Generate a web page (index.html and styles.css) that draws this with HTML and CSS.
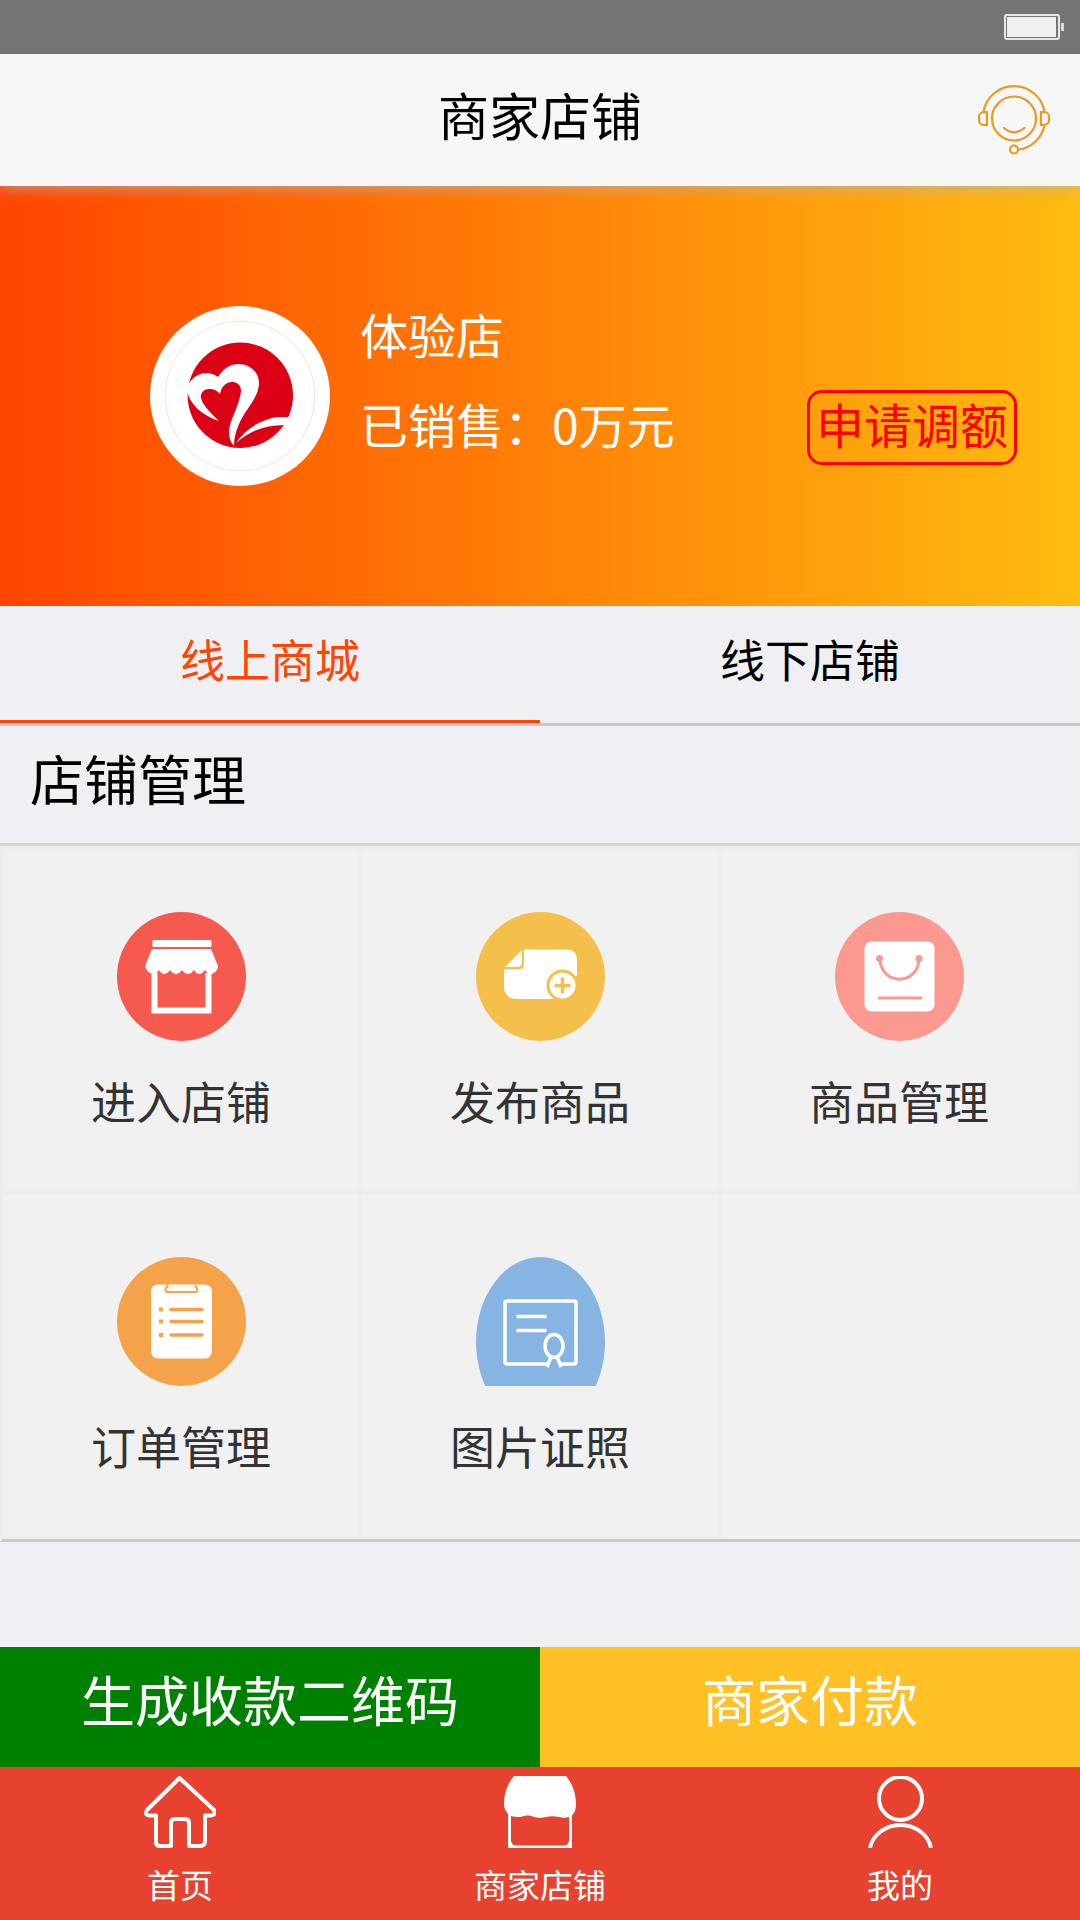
FILE: index.html
```html
<!DOCTYPE html>
<html lang="zh-CN">
<head>
<meta charset="utf-8">
<meta name="viewport" content="width=device-width">
<title>商家店铺</title>
<link rel="stylesheet" href="styles.css">
</head>
<body class="app">
<div class="status-bar">
  <svg class="battery" viewBox="0 0 60 26" aria-hidden="true">
    <rect x="1" y="1" width="54" height="24" rx="2" fill="none" stroke="#e8e8e8" stroke-width="2"/>
    <rect x="3" y="3" width="49" height="20" fill="#f0f0f0"/>
    <rect x="57" y="9" width="3" height="8" fill="#d8d8d8"/>
  </svg>
</div>
<header class="header">
  <h1 class="header-title">商家店铺</h1>
  <button class="service" type="button" aria-label="客服">
    <svg class="service-icon" viewBox="0 0 72 72" fill="none" stroke="#ec971f" stroke-width="2.200">
      <circle cx="36" cy="34.500" r="22"/>
      <path d="M5.500 27.500A31 31 0 0 1 66.500 27.500M66.500 41.500A31 31 0 0 1 41 65.500"/>
      <path d="M9 28v13H6a5 5 0 0 1-5-5v-3a5 5 0 0 1 5-5zM63 28v13h3a5 5 0 0 0 5-5v-3a5 5 0 0 0-5-5z"/>
      <path d="M26 44q10 8.500 20.500 0" stroke-linecap="round"/>
      <circle cx="36" cy="65.500" r="4"/>
    </svg>
  </button>
</header>
<main class="main">
  <section class="hero">
    <svg class="logo" viewBox="0 0 180 180" role="img" aria-label="店铺标志">
      <circle cx="90" cy="90" r="90" fill="#fff"/>
      <circle cx="90" cy="90" r="74.700" fill="none" stroke="#fbd3bd" stroke-width="0.700"/>
      <circle cx="90.300" cy="89.300" r="52.700" fill="#dc0014"/>
      <path fill="#fff" d="M37 84C38 75 46 67 57 67C61 67 65 69 68 71C73 63 80 58 88 58C100 58 109 66 109 77C109 85 105 92 99 101C90 114 84 126 84 140C79 135 78 127 80 119C83 109 90 96 91 85C91 78 86 76 82 76C75 76 71 82 70 88C67 84 63 83 59 83C54 83 50 87 51 92C53 100 61 107 69 115C54 110 44 101 40 93C38 89 37 87 37 84Z"/>
      <path fill="#fff" d="M86 137C96 122 112 113 128 111L140 111L139 119C118 118 100 124 86 137Z"/>
    </svg>
    <div class="shop">
      <p class="shop-line">体验店</p>
      <p class="shop-line">已销售：0万元</p>
    </div>
    <button class="adjust" type="button">申请调额</button>
  </section>
  <nav class="tabs">
    <button class="tab tab-active" type="button">线上商城</button>
    <button class="tab" type="button">线下店铺</button>
  </nav>
  <h2 class="section-title">店铺管理</h2>
  <div class="grid">
    <a class="tile" href="#shop">
      <svg class="tile-icon" viewBox="0 0 129 129" aria-hidden="true">
        <circle cx="64.500" cy="64.500" r="64.500" fill="#f6594e"/>
        <rect x="35.500" y="28" width="59" height="7" rx="1" fill="#fff"/>
        <path fill="#fff" d="M35 37h59l7 17q0 5-6 8q-4 1-7-4q-6 8-11 0q-6 8-12 0q-6 8-12 0q-6 8-11 0q-3 5-7 4q-6-3-7-8z"/>
        <path d="M37.500 61v37.500h54V61" fill="none" stroke="#fff" stroke-width="6"/>
      </svg>
      <span class="tile-label">进入店铺</span>
    </a>
    <a class="tile" href="#publish">
      <svg class="tile-icon" viewBox="0 0 129 129" aria-hidden="true">
        <circle cx="64.500" cy="64.500" r="64.500" fill="#f5bf4b"/>
        <path fill="#fff" d="M48 37.500h42q11 0 11 11V87H39q-11-2-11-12V57.500h14q6 0 6-6z"/>
        <path fill="#fff" d="M46 38v12q0 5-5 5H29z"/>
        <path fill="#f5bf4b" d="M101 63v26H76z"/>
        <circle cx="86.500" cy="73.500" r="14.500" fill="#fff" stroke="#f5bf4b" stroke-width="3"/>
        <path d="M86.500 65.500v16M78.500 73.500h16" stroke="#f5bf4b" stroke-width="3.500"/>
      </svg>
      <span class="tile-label">发布商品</span>
    </a>
    <a class="tile" href="#goods">
      <svg class="tile-icon" viewBox="0 0 129 129" aria-hidden="true">
        <circle cx="64.500" cy="64.500" r="64.500" fill="#fb988f"/>
        <rect x="29.500" y="29.500" width="70" height="70" rx="7" fill="#fff"/>
        <path d="M45 47c1 27 38 27 39 0M43 86h44" fill="none" stroke="#fb988f" stroke-width="3"/>
        <circle cx="44.500" cy="46.500" r="3.500" fill="#fb988f"/>
        <circle cx="84" cy="46.500" r="3.500" fill="#fb988f"/>
      </svg>
      <span class="tile-label">商品管理</span>
    </a>
    <a class="tile" href="#orders">
      <svg class="tile-icon" viewBox="0 0 129 129" aria-hidden="true">
        <circle cx="64.500" cy="64.500" r="64.500" fill="#f4a34b"/>
        <rect x="34" y="27.500" width="61" height="74" rx="7" fill="#fff"/>
        <path d="M50.500 27.500v2q-2 1-2 3.500q0 2 2 2h28q2 0 2-2q0-2.500-2-3.500v-2" fill="none" stroke="#f4a34b" stroke-width="2"/>
        <path d="M42 52.500h4M42 64.500h4M42 78h4" stroke="#f4a34b" stroke-width="4"/>
        <path d="M54 52.500h31M54 64.500h31M54 78h31" stroke="#f4a34b" stroke-width="3.500" stroke-linecap="round"/>
      </svg>
      <span class="tile-label">订单管理</span>
    </a>
    <a class="tile" href="#licence">
      <svg class="tile-icon" viewBox="0 0 129 129" aria-hidden="true">
        <ellipse cx="64.500" cy="85" rx="64.500" ry="85" fill="#86b4e3"/>
        <g fill="none" stroke="#fff" stroke-width="3.500">
          <path d="M71 107H31q-2 0-2-2V46q0-2 2-2h67q2 0 2 2v59q0 2-2 2H85"/>
          <path d="M40.500 59.500h30M40.500 73.500h30"/>
          <ellipse cx="78" cy="89" rx="9" ry="11.500"/>
          <path d="M74.500 101l-3.500 9M81.500 101l3.500 9"/>
        </g>
      </svg>
      <span class="tile-label">图片证照</span>
    </a>
  </div>
</main>
<div class="actions">
  <button class="action action-collect" type="button">生成收款二维码</button>
  <button class="action action-pay" type="button">商家付款</button>
</div>
<nav class="navbar">
  <a class="nav-item" href="#home">
    <svg class="nav-icon" viewBox="0 0 72 72" fill="none" stroke="#fff" stroke-width="4" stroke-linejoin="round" aria-hidden="true">
      <path d="M35.500 2L3 34q-3 5.500 3 5.500h6V66q0 4 4 4h11V47q0-4 4-4h10q4 0 4 4v23h11q5 0 5-5V39.500h6q5 0 3-5.500z"/>
    </svg>
    <span class="nav-label">首页</span>
  </a>
  <a class="nav-item" href="#store">
    <svg class="nav-icon" viewBox="0 0 72 72" aria-hidden="true">
      <path fill="#fff" d="M10 0h52c6 7 10 17 10 28c0 6-2 10-5 12c-4 2-8 2-12 1c-5-1-9-1-13 0c-3 1-9 1-12 0c-4-2-9-2-13 0c-4 0-9 0-12-2c-3-3-5-6-5-11C0 17 4 7 10 0z"/>
      <path d="M5.500 38v33h61V38" fill="none" stroke="#fff" stroke-width="3"/>
      <path d="M7 66v4h4q-3 0-4-4M65 66v4h-4q3 0 4-4" fill="#fff" stroke="#fff"/>
    </svg>
    <span class="nav-label">商家店铺</span>
  </a>
  <a class="nav-item" href="#me">
    <svg class="nav-icon" viewBox="0 0 72 72" fill="none" stroke="#fff" stroke-width="4" aria-hidden="true">
      <circle cx="36.500" cy="22.500" r="21.500"/>
      <path d="M6 72a31 28 0 0 1 61 0"/>
    </svg>
    <span class="nav-label">我的</span>
  </a>
</nav>
</body>
</html>
```
FILE: styles.css
```css
* {
  box-sizing: border-box;
}

.app {
  margin: 0;
  min-height: 100vh;
  display: flex;
  flex-direction: column;
  background: #efeff4;
  color: #000;
  font-family: "Noto Sans CJK SC", sans-serif;
}

button {
  margin: 0;
  padding: 0;
  border: 0;
  background: none;
  color: inherit;
  font: inherit;
}

a {
  color: inherit;
  text-decoration: none;
}

svg {
  display: block;
}

.status-bar {
  position: relative;
  z-index: 2;
  display: flex;
  justify-content: flex-end;
  padding: 14px 16px;
  background: #757575;
}

.battery {
  width: 60px;
  height: 26px;
}

.header {
  position: relative;
  z-index: 1;
  display: grid;
  grid-template-columns: 1fr auto 1fr;
  align-items: start;
  padding: 30px;
  background: #f7f7f7;
  box-shadow: 0 0 15px #b4b4b4;
}

.header-title {
  grid-column: 2;
  margin: 0;
  font-size: 51px;
  font-weight: 400;
  line-height: 60px;
}

.service {
  justify-self: end;
}

.service-icon {
  width: 72px;
  height: 72px;
}

.main {
  flex: 1;
}

.hero {
  display: flex;
  align-items: flex-start;
  padding: 120px 63px 120px 150px;
  background: linear-gradient(to right, #ff4500, #ffbc10);
}

.logo {
  width: 180px;
  height: 180px;
}

.shop {
  flex: 1;
  padding-left: 30px;
}

.shop-line {
  margin: 0 0 36px;
  color: #fff;
  font-size: 48px;
  line-height: 54px;
}

.adjust {
  margin-top: 84px;
  padding: 0 6px 9px;
  border: 3px solid #f00;
  border-radius: 15px;
  color: #f00;
  font-size: 48px;
  line-height: 60px;
}

.tabs {
  display: flex;
  border-bottom: 3px solid #c8c7cc;
}

.tab {
  flex: 1;
  padding: 26px 0 34px;
  border-bottom: 3px solid transparent;
  font-size: 45px;
  line-height: 54px;
}

.tab-active {
  border-color: #ff4500;
  color: #ff4500;
}

.section-title {
  margin: 0;
  padding: 22px 30px 35px;
  border-bottom: 3px solid #d4d5d5;
  font-size: 54px;
  font-weight: 400;
  line-height: 60px;
}

.grid {
  display: grid;
  grid-template-columns: repeat(3, 1fr);
  border-top: 3px solid #eee;
  border-left: 3px solid #eee;
  border-bottom: 3px solid #c8c7cc;
  background: #f1f1f1;
}

.tile {
  display: flex;
  flex-direction: column;
  align-items: center;
  gap: 33px;
  padding: 63px 0;
  border-right: 3px solid #eee;
  border-bottom: 3px solid #eee;
}

.tile-icon {
  width: 129px;
  height: 129px;
}

.tile-label {
  color: #333;
  font-size: 45px;
  line-height: 54px;
}

.actions {
  display: flex;
}

.action {
  flex: 1;
  padding: 22px 0 38px;
  color: #fff;
  font-size: 54px;
  line-height: 60px;
}

.action-collect {
  background: #008000;
}

.action-pay {
  background: #ffc125;
}

.navbar {
  display: flex;
  padding: 9px 0 15px;
  background: #e7412f;
}

.nav-item {
  flex: 1;
  display: flex;
  flex-direction: column;
  align-items: center;
  gap: 15px;
}

.nav-icon {
  width: 72px;
  height: 72px;
}

.nav-label {
  color: #fff;
  font-size: 33px;
  line-height: 42px;
}
```
